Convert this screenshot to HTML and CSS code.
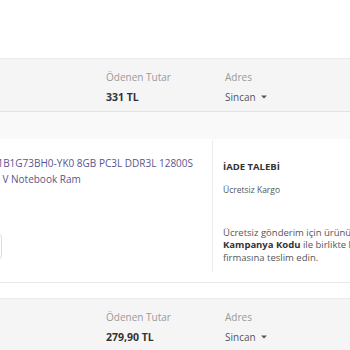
FILE: index.html
```html
<!DOCTYPE html>
<html lang="tr">

<head>
    <meta charset="UTF-8">
    <meta name="viewport" content="width=device-width, initial-scale=1.0">
    <title>Siparişlerim</title>
    <link rel="stylesheet" href="styles.css">
</head>

<body>
    <div class="page">
        <div class="order">
            <div class="order-head">
                <div></div>
                <div class="head-cell">
                    <span class="head-label">Ödenen Tutar</span>
                    <span class="head-value">331 TL</span>
                </div>
                <div class="head-cell">
                    <span class="head-label">Adres</span>
                    <span class="head-value address">Sincan
                        <svg class="caret" width="6" height="4" viewBox="0 0 6 4"><path d="M0 0.5h6L3 3.5z" fill="#555" /></svg>
                    </span>
                </div>
            </div>
            <div class="order-strip"></div>
            <div class="order-body">
                <div class="product">
                    <a class="product-name" href="#">M471B1G73BH0-YK0 8GB PC3L DDR3L 12800S 1600 V Notebook Ram</a>
                    <button class="product-btn" type="button"></button>
                </div>
                <div class="return-info">
                    <h3 class="return-title">İADE TALEBİ</h3>
                    <p class="return-cargo">Ücretsiz Kargo</p>
                    <p class="return-text">Ücretsiz gönderim için ürününüzü <b>Kampanya Kodu</b> ile birlikte lojistik firmasına teslim edin.</p>
                </div>
            </div>
        </div>

        <div class="order">
            <div class="order-head">
                <div></div>
                <div class="head-cell">
                    <span class="head-label">Ödenen Tutar</span>
                    <span class="head-value">279,90 TL</span>
                </div>
                <div class="head-cell">
                    <span class="head-label">Adres</span>
                    <span class="head-value address">Sincan
                        <svg class="caret" width="6" height="4" viewBox="0 0 6 4"><path d="M0 0.5h6L3 3.5z" fill="#555" /></svg>
                    </span>
                </div>
            </div>
        </div>
    </div>
</body>

</html>
```

FILE: styles.css
```css
* {
    box-sizing: border-box;
    margin: 0;
    padding: 0;
    font-family: 'Open Sans', 'Noto Sans', sans-serif;
}

body {
    background-color: white;
    overflow: hidden;
    height: 350px;
}

.page {
    width: 800px;
    margin-left: -300px;
    padding-top: 58px;
}

.order {
    border-top: 1px solid #ececec;
    border-bottom: 1px solid #e9e9e9;
    margin-bottom: 15px;
}

.order-head {
    display: grid;
    grid-template-columns: 406px 119px 1fr;
    background-color: #f5f5f5;
    border-bottom: 1px solid #e2e2e2;
    padding: 11px 0 7px;
}

.head-cell {
    display: flex;
    flex-direction: column;
    gap: 6px;
}

.head-label {
    font-size: 10px;
    line-height: 14px;
    color: #9a9a9a;
}

.head-value {
    font-size: 10.5px;
    line-height: 14px;
    font-weight: 700;
    color: #333;
}

.head-value.address {
    font-size: 10px;
    font-weight: 400;
    color: #555;
    display: flex;
    align-items: center;
    gap: 5px;
}

.order-strip {
    height: 27px;
    background-color: #f9f9f9;
}

.order-body {
    display: grid;
    grid-template-columns: 512px 1fr;
    padding: 1px 0 10px;
}

.product {
    padding-top: 16px;
}

.product-name {
    display: block;
    width: 228px;
    margin-left: 277px;
    font-size: 10px;
    line-height: 15.5px;
    color: #59558f;
    text-decoration: none;
}

.product-btn {
    display: block;
    width: 60px;
    height: 25px;
    margin: 47px 0 0 242px;
    border: 1px solid #ddd;
    border-radius: 3px;
    background-color: white;
}

.return-info {
    border-left: 1px solid #ececec;
    padding: 21px 0 8px 10px;
    width: 202px;
}

.return-title {
    font-size: 9.5px;
    line-height: 12px;
    font-weight: 700;
    color: #333;
    margin-bottom: 11px;
}

.return-cargo {
    font-size: 8.5px;
    line-height: 12.5px;
    color: #555;
    margin-bottom: 30px;
}

.return-text {
    font-size: 9.5px;
    line-height: 12.5px;
    color: #555;
}

.return-text b {
    color: #333;
}
```
